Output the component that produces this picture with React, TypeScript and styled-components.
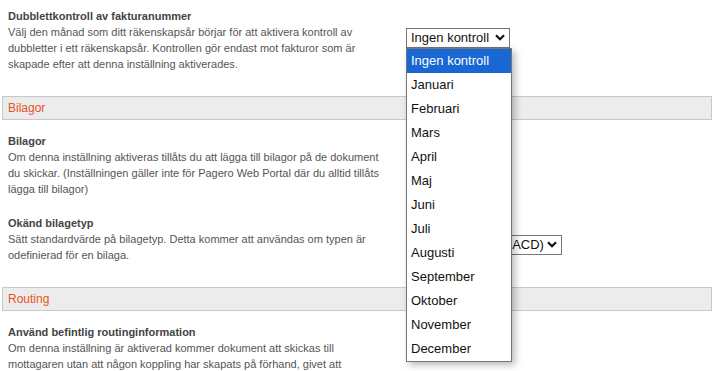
import React from "react";
import styled, { createGlobalStyle } from "styled-components";

const GlobalStyle = createGlobalStyle`
  html, body {
    margin: 0;
    padding: 0;
    overflow: hidden;
    background: #fff;
  }
  body {
    font-family: "Liberation Sans", Arial, sans-serif;
  }
`;

const Page = styled.div`
  padding: 8px 15px 0 2px;
`;

const SettingRow = styled.div`
  display: grid;
  grid-template-columns: 380px 1fr;
  column-gap: 18px;
  align-items: start;
  padding-left: 6px;
  margin-bottom: 18px;
`;

const SettingText = styled.div`
  font-size: 11px;
  line-height: 16px;
  color: #555;
`;

const SettingTitle = styled.div`
  font-weight: bold;
  color: #444;
`;

const ControlCell = styled.div`
  padding-top: 20px;
`;

const SectionBar = styled.div`
  margin: 24px 0 13px;
  height: 22px;
  line-height: 22px;
  padding: 0 5px;
  border: 1px solid #c8c8c8;
  background: #ececec;
  color: #e5561f;
  font-size: 12px;
`;

const SelectWrap = styled.div`
  position: relative;
  display: inline-block;
`;

const SelectBox = styled.div`
  display: inline-flex;
  align-items: center;
  height: 17px;
  padding: 0 4px 1px;
  border: 1px solid #767676;
  background: #fff;
  color: #111;
  font-size: 13px;
  line-height: 17px;
  white-space: nowrap;
`;

const Chevron = styled.svg<{ $gap: number }>`
  margin-left: ${(p) => p.$gap}px;
  flex: none;
`;

const OptionList = styled.ul<{ $width: number }>`
  position: absolute;
  top: 100%;
  left: 0;
  z-index: 10;
  width: ${(p) => p.$width}px;
  margin: 0;
  padding: 0;
  list-style: none;
  border: 1px solid #767676;
  background: #fff;
  box-shadow: 3px 3px 7px rgba(0, 0, 0, 0.28);
`;

const OptionItem = styled.li<{ $selected?: boolean }>`
  height: 24px;
  line-height: 24px;
  padding-left: 4px;
  font-size: 13px;
  color: ${(p) => (p.$selected ? "#fff" : "#111")};
  background: ${(p) => (p.$selected ? "#1967d2" : "transparent")};
  white-space: nowrap;
`;

const months = [
  "Ingen kontroll",
  "Januari",
  "Februari",
  "Mars",
  "April",
  "Maj",
  "Juni",
  "Juli",
  "Augusti",
  "September",
  "Oktober",
  "November",
  "December",
];

const ChevronIcon = ({ gap = 6 }: { gap?: number }) => (
  <Chevron $gap={gap} width="10" height="7" viewBox="0 0 10 7">
    <path d="M1 1.2 L5 5.2 L9 1.2" fill="none" stroke="#111" strokeWidth="2.2" />
  </Chevron>
);

const Setting = (props: { title: string; text: string; control?: React.ReactNode }) => (
  <SettingRow>
    <SettingText>
      <SettingTitle>{props.title}</SettingTitle>
      {props.text}
    </SettingText>
    <ControlCell>{props.control}</ControlCell>
  </SettingRow>
);

export default function App() {
  return (
    <Page>
      <GlobalStyle />
      <Setting
        title="Dubblettkontroll av fakturanummer"
        text="Välj den månad som ditt räkenskapsår börjar för att aktivera kontroll av dubbletter i ett räkenskapsår. Kontrollen gör endast mot fakturor som är skapade efter att denna inställning aktiverades."
        control={
          <SelectWrap>
            <SelectBox>
              Ingen kontroll
              <ChevronIcon />
            </SelectBox>
            <OptionList $width={104}>
              {months.map((m, i) => (
                <OptionItem key={m} $selected={i === 0}>
                  {m}
                </OptionItem>
              ))}
            </OptionList>
          </SelectWrap>
        }
      />
      <SectionBar>Bilagor</SectionBar>
      <Setting
        title="Bilagor"
        text="Om denna inställning aktiveras tillåts du att lägga till bilagor på de dokument du skickar. (Inställningen gäller inte för Pagero Web Portal där du alltid tillåts lägga till bilagor)"
      />
      <Setting
        title="Okänd bilagetyp"
        text="Sätt standardvärde på bilagetyp. Detta kommer att användas om typen är odefinierad för en bilaga."
        control={
          <SelectBox>
            Bilagedokument (ACD)
            <ChevronIcon gap={3} />
          </SelectBox>
        }
      />
      <SectionBar>Routing</SectionBar>
      <Setting
        title="Använd befintlig routinginformation"
        text="Om denna inställning är aktiverad kommer dokument att skickas till mottagaren utan att någon koppling har skapats på förhand, givet att mottagaren kan identifieras."
      />
    </Page>
  );
}
